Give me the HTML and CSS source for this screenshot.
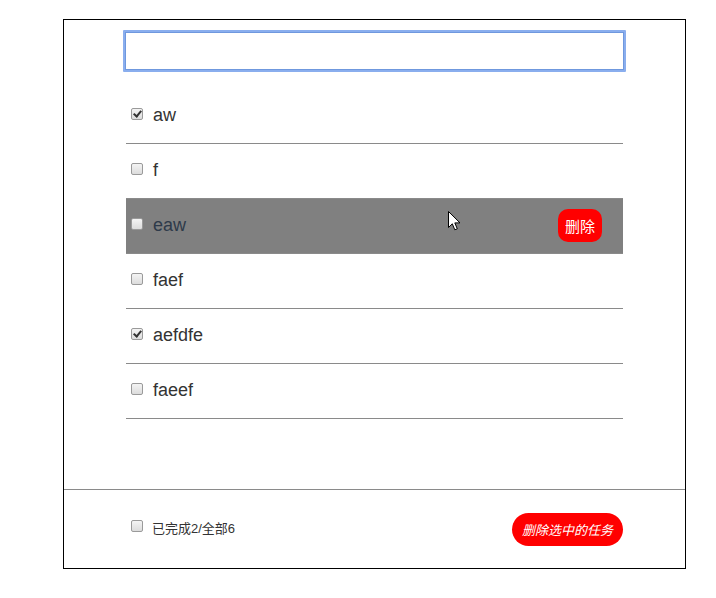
FILE: index.html
```html
<!DOCTYPE html>
<html lang="zh">
<head>
<meta charset="utf-8">
<link rel="stylesheet" href="styles.css">
</head>
<body>
<div class="todo">
  <div class="main">
    <input class="new-task" type="text">
    <ul class="list">
      <li class="item"><input type="checkbox" class="cb" checked><span class="name">aw</span></li>
      <li class="item"><input type="checkbox" class="cb"><span class="name">f</span></li>
      <li class="item hover"><input type="checkbox" class="cb"><span class="name">eaw</span><button class="del">删除</button>
        <svg class="cursor" width="13" height="21" viewBox="0 0 13 21"><path d="M0.5 0.5 L0.5 16.5 L4.3 12.8 L6.8 18.8 L9.3 17.8 L6.8 11.9 L12 11.9 Z" fill="#fff" stroke="#000" stroke-width="1" stroke-linejoin="miter"/></svg>
      </li>
      <li class="item"><input type="checkbox" class="cb"><span class="name">faef</span></li>
      <li class="item"><input type="checkbox" class="cb" checked><span class="name">aefdfe</span></li>
      <li class="item"><input type="checkbox" class="cb"><span class="name">faeef</span></li>
    </ul>
  </div>
  <div class="footer">
    <label class="summary"><input type="checkbox" class="cb"><span class="summary-text">已完成2/全部6</span></label>
    <button class="del-all">删除选中的任务</button>
  </div>
</div>
</body>
</html>
```
FILE: styles.css
```css
html, body {
  margin: 0;
  padding: 0;
  background: #fff;
}
body {
  font-family: "Liberation Sans", Arial, "Noto Sans CJK SC", sans-serif;
  color: #333;
}
.todo {
  margin: 19px 0 0 63px;
  width: 621px;
  border: 1px solid #000;
}
.main {
  padding: 10px 62px 70px;
}
.new-task {
  display: block;
  box-sizing: border-box;
  margin: 0 -3px;
  width: calc(100% + 6px);
  height: 42px;
  border: 2px solid #8aaeee;
  border-radius: 1px;
  outline: none;
  box-shadow: inset 0 0 0 1px #6f98de;
}
.list {
  list-style: none;
  margin: 17px 0 0;
  padding: 0;
}
.item {
  position: relative;
  display: flex;
  align-items: center;
  height: 54px;
  border-bottom: 1px solid #8a8a8a;
  padding-left: 5px;
  font-size: 18px;
}
.item.hover {
  background: #808080;
}
.item.hover .name {
  color: #2e3a4a;
}
.cb {
  appearance: none;
  -webkit-appearance: none;
  position: relative;
  flex: none;
  box-sizing: border-box;
  width: 12px;
  height: 12px;
  margin: -4px 10px 0 0;
  border: 1px solid #9a9a9a;
  border-radius: 2px;
  background: linear-gradient(#f4f4f4, #dcdcdc);
}
.cb:checked::after {
  content: "";
  position: absolute;
  left: 3px;
  top: 0px;
  width: 3px;
  height: 6px;
  border: solid #333;
  border-width: 0 2px 2px 0;
  transform: rotate(40deg);
}
.name {
  flex: 1;
  margin-top: -2px;
}
.del {
  margin-right: 21px;
  height: 33px;
  padding: 0 7px;
  border: none;
  border-radius: 10px;
  background: #ff0000;
  color: #fff;
  font-family: "Noto Sans CJK SC", sans-serif;
  font-size: 15px;
  margin-top: -2px;
}
.cursor {
  position: absolute;
  left: 322px;
  top: 12px;
}
.footer {
  display: flex;
  align-items: center;
  justify-content: space-between;
  height: 78px;
  border-top: 1px solid #8a8a8a;
  padding: 0 62px 0 67px;
}
.summary {
  display: flex;
  align-items: center;
  font-family: "Liberation Sans", "Noto Sans CJK SC", sans-serif;
  font-size: 13px;
  color: #333;
}
.summary-text {
  line-height: 1;
  margin-top: -2px;
}
.summary .cb {
  margin: -6px 9px 0 0;
}
.del-all {
  height: 33px;
  padding: 0 10px;
  border: none;
  border-radius: 17px;
  background: #ff0000;
  color: #fff;
  font-family: "Noto Sans CJK SC", sans-serif;
  font-size: 13px;
  font-style: italic;
}
```
